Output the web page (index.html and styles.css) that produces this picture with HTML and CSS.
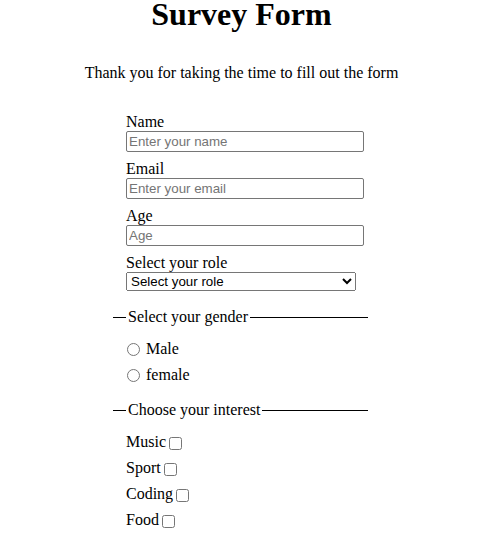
FILE: index.html
```html
<!DOCTYPE html>
<html lang="en">
<head>
<meta charset="utf-8">
<title>Survey Form</title>
<link rel="stylesheet" href="styles.css">
</head>
<body>
<div class="page">
  <h1 class="title">Survey Form</h1>
  <p class="intro">Thank you for taking the time to fill out the form</p>
  <form class="survey">
    <div class="field">
      <label for="name">Name</label>
      <input class="text-input" id="name" type="text" placeholder="Enter your name">
    </div>
    <div class="field">
      <label for="email">Email</label>
      <input class="text-input" id="email" type="email" placeholder="Enter your email">
    </div>
    <div class="field">
      <label for="age">Age</label>
      <input class="text-input" id="age" type="number" placeholder="Age">
    </div>
    <div class="field field-role">
      <label for="role">Select your role</label>
      <select class="select-input" id="role">
        <option>Select your role</option>
        <option>Student</option>
        <option>Developer</option>
        <option>Other</option>
      </select>
    </div>
    <fieldset class="group group-gender">
      <legend>Select your gender</legend>
      <label class="radio-row"><input type="radio" name="gender" class="radio"> Male</label>
      <label class="radio-row"><input type="radio" name="gender" class="radio"> female</label>
    </fieldset>
    <fieldset class="group group-interest">
      <legend>Choose your interest</legend>
      <label class="check-row">Music<input type="checkbox" class="check"></label>
      <label class="check-row">Sport<input type="checkbox" class="check"></label>
      <label class="check-row">Coding<input type="checkbox" class="check"></label>
      <label class="check-row">Food<input type="checkbox" class="check"></label>
    </fieldset>
  </form>
</div>
</body>
</html>
```
FILE: styles.css
```css
html, body {
  margin: 0;
  padding: 0;
  background: #fff;
}

body {
  font-family: "Liberation Serif", "Times New Roman", serif;
  font-size: 16px;
  color: #000;
}

.page {
  width: 483px;
}

.title {
  margin: 0;
  font-size: 32px;
  line-height: 28px;
  font-weight: bold;
  text-align: center;
}

.intro {
  margin: 36px 0 0;
  text-align: center;
  line-height: 18px;
}

.survey {
  width: 255px;
  margin: 31px 0 0 113px;
}

.field {
  display: flex;
  flex-direction: column;
  align-items: flex-start;
  padding-left: 13px;
  margin-bottom: 8px;
}

.field label {
  line-height: 18px;
}

.text-input {
  box-sizing: border-box;
  width: 238px;
  height: 21px;
  margin: 0;
  padding: 1px 2px;
  border: 1px solid #767676;
  border-radius: 2px;
  font-family: "Liberation Sans", Arial, sans-serif;
  font-size: 13.333px;
  color: #000;
  background: #fff;
}

.text-input::placeholder {
  color: #757575;
}

.select-input {
  box-sizing: border-box;
  width: 230px;
  height: 19px;
  margin: 0;
  font-family: "Liberation Sans", Arial, sans-serif;
  font-size: 13.333px;
  color: #000;
}

.field-role {
  margin-bottom: 17px;
}

.group {
  margin: 0;
  padding: 10px 13px 13px;
  border: none;
  border-top: 1px solid #000;
  display: flex;
  flex-direction: column;
}

.group legend {
  padding: 0 2px;
  line-height: 18px;
}

.radio-row {
  display: flex;
  align-items: center;
  height: 26px;
  gap: 6px;
}

.radio {
  width: 13px;
  height: 13px;
  margin: 0 0 0 1px;
}

.check-row {
  display: flex;
  align-items: center;
  height: 26px;
  gap: 3px;
}

.check {
  width: 13px;
  height: 13px;
  margin: 2px 0 0;
}
```
